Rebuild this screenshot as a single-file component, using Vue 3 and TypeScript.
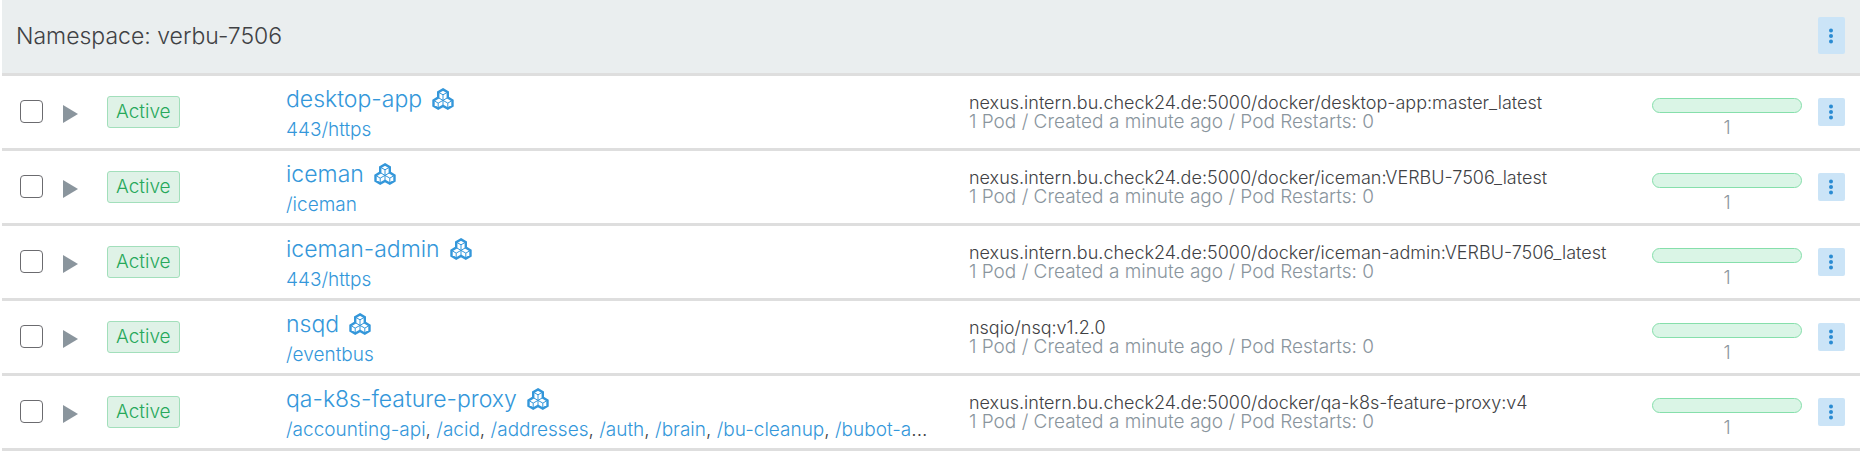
<script setup lang="ts">
interface Workload {
  name: string
  endpoints: string[]
  image: string
  scale: number
}

const namespace = 'verbu-7506'

const workloads: Workload[] = [
  {
    name: 'desktop-app',
    endpoints: ['443/https'],
    image: 'nexus.intern.bu.check24.de:5000/docker/desktop-app:master_latest',
    scale: 1,
  },
  {
    name: 'iceman',
    endpoints: ['/iceman'],
    image: 'nexus.intern.bu.check24.de:5000/docker/iceman:VERBU-7506_latest',
    scale: 1,
  },
  {
    name: 'iceman-admin',
    endpoints: ['443/https'],
    image: 'nexus.intern.bu.check24.de:5000/docker/iceman-admin:VERBU-7506_latest',
    scale: 1,
  },
  { name: 'nsqd', endpoints: ['/eventbus'], image: 'nsqio/nsq:v1.2.0', scale: 1 },
  {
    name: 'qa-k8s-feature-proxy',
    endpoints: ['/accounting-api', '/acid', '/addresses', '/auth', '/brain', '/bu-cleanup', '/bubot-a'],
    image: 'nexus.intern.bu.check24.de:5000/docker/qa-k8s-feature-proxy:v4',
    scale: 1,
  },
]
</script>

<template>
  <table class="workloads">
    <colgroup>
      <col class="col-select" />
      <col class="col-expand" />
      <col class="col-state" />
      <col />
      <col />
      <col class="col-scale" />
      <col class="col-actions" />
    </colgroup>
    <thead>
      <tr class="group">
        <th colspan="6" scope="colgroup">Namespace: {{ namespace }}</th>
        <td>
          <button type="button" class="menu menu-tall" aria-label="Namespace actions">
            <svg viewBox="0 0 4 16" width="4" height="16" aria-hidden="true">
              <circle cx="2" cy="2.5" r="2" /><circle cx="2" cy="8" r="2" /><circle cx="2" cy="13.5" r="2" />
            </svg>
          </button>
        </td>
      </tr>
    </thead>
    <tbody>
      <tr v-for="w in workloads" :key="w.name" class="row">
        <td class="select"><input type="checkbox" :aria-label="`Select ${w.name}`" /></td>
        <td class="expand">
          <button type="button" class="toggle" :aria-label="`Expand ${w.name}`">
            <svg viewBox="0 0 15 18" width="15" height="18" aria-hidden="true"><path d="M0 0L15 9L0 18Z" /></svg>
          </button>
        </td>
        <td><span class="badge">Active</span></td>
        <td class="identity">
          <div class="name">
            <a href="#">{{ w.name }}</a>
            <svg class="cubes" viewBox="0 0 22 22" width="22" height="22" aria-hidden="true">
              <path
                class="outline"
                d="M11 1.4L15.8 4.1V9.6L20.5 12.4V17.9L15.8 20.6L11 17.9L6.2 20.6L1.5 17.9V12.4L6.2 9.6V4.1Z"
              />
              <path
                class="edges"
                d="M6.2 4.1L11 6.8L15.8 4.1M11 6.8V12.4M6.2 9.6L11 12.4L15.8 9.6M11 12.4V17.9M1.5 12.4L6.2 15.1L11 12.4L15.8 15.1L20.5 12.4M6.2 15.1V20.6M15.8 15.1V20.6"
              />
            </svg>
          </div>
          <div class="endpoints">
            <template v-for="(e, i) in w.endpoints" :key="e"
              ><template v-if="i > 0">, </template><a href="#">{{ e }}</a></template
            ><template v-if="w.endpoints.length > 1">...</template>
          </div>
        </td>
        <td class="details">
          <div class="image">{{ w.image }}</div>
          <div class="meta">{{ w.scale }} Pod / Created a minute ago / Pod Restarts: 0</div>
        </td>
        <td class="scale">
          <div class="bar"></div>
          <div class="count">{{ w.scale }}</div>
        </td>
        <td>
          <button type="button" class="menu" :aria-label="`Actions for ${w.name}`">
            <svg viewBox="0 0 4 16" width="4" height="16" aria-hidden="true">
              <circle cx="2" cy="2.5" r="2" /><circle cx="2" cy="8" r="2" /><circle cx="2" cy="13.5" r="2" />
            </svg>
          </button>
        </td>
      </tr>
    </tbody>
  </table>
</template>

<style>
body {
  margin: 0;
  background: #fff;
}
#app {
  padding-left: 2px;
}
</style>

<style scoped>
.workloads {
  width: 100%;
  table-layout: fixed;
  border-spacing: 0;
  font-family: Inter, 'Open Sans', sans-serif;
  font-weight: 300;
  font-size: 18px;
  color: #404144;
}
.col-select {
  width: 59px;
}
.col-expand {
  width: 46px;
}
.col-state {
  width: 179px;
}
.col-scale {
  width: 166px;
}
.col-actions {
  width: 42px;
}
th,
td {
  box-sizing: border-box;
  padding: 0;
  text-align: left;
  vertical-align: middle;
  border-bottom: 3px solid #dedede;
}
.group th,
.group td {
  height: 76px;
  padding-bottom: 2px;
  background: #eaeeef;
}
.group th {
  padding-left: 14px;
  font-size: 23px;
  font-weight: 300;
}
.row td {
  height: 75px;
}
.row .select {
  padding-left: 18px;
  padding-bottom: 1px;
}
.select input {
  appearance: none;
  display: block;
  box-sizing: border-box;
  width: 23px;
  height: 23px;
  margin: 0;
  border: 1px solid #6b6b6f;
  border-radius: 4px;
  background: #fff;
}
button {
  display: flex;
  align-items: center;
  justify-content: center;
  padding: 0;
  border: 0;
  font: inherit;
}
.row .expand {
  padding-top: 4px;
}
.toggle {
  margin-left: 2px;
  background: none;
  fill: #8a959d;
}
.badge {
  display: block;
  width: fit-content;
  padding: 0 8px;
  border: 1px solid #a2dfbb;
  border-radius: 3px;
  background: #dff2e7;
  color: #27a85b;
  font-size: 19px;
  line-height: 30px;
}
a {
  color: #3497da;
  text-decoration: none;
}
.row .identity {
  padding-top: 4px;
}
.name {
  display: flex;
  align-items: center;
  gap: 10px;
  font-size: 23px;
  line-height: 28px;
}
.cubes {
  fill: none;
  stroke: #3497da;
}
.outline {
  stroke-width: 2.4;
}
.edges {
  stroke-width: 1;
}
.endpoints {
  margin-top: 4px;
  font-size: 19px;
  line-height: 26px;
  white-space: nowrap;
}
.image,
.meta {
  line-height: 19px;
  white-space: nowrap;
}
.meta {
  font-size: 19px;
  color: #8a959d;
}
.row .scale {
  padding-top: 12px;
}
.bar {
  box-sizing: border-box;
  width: 150px;
  height: 15px;
  border: 1px solid #86dfab;
  border-radius: 8px;
  background: #daf5e6;
}
.count {
  width: 150px;
  margin-top: 4px;
  line-height: 22px;
  text-align: center;
  color: #8a959d;
}
.menu {
  width: 27px;
  height: 28px;
  padding-right: 1px;
  border-radius: 2px;
  background: #cbe4f7;
  fill: #2a8bd2;
}
.menu-tall {
  height: 37px;
}
</style>
